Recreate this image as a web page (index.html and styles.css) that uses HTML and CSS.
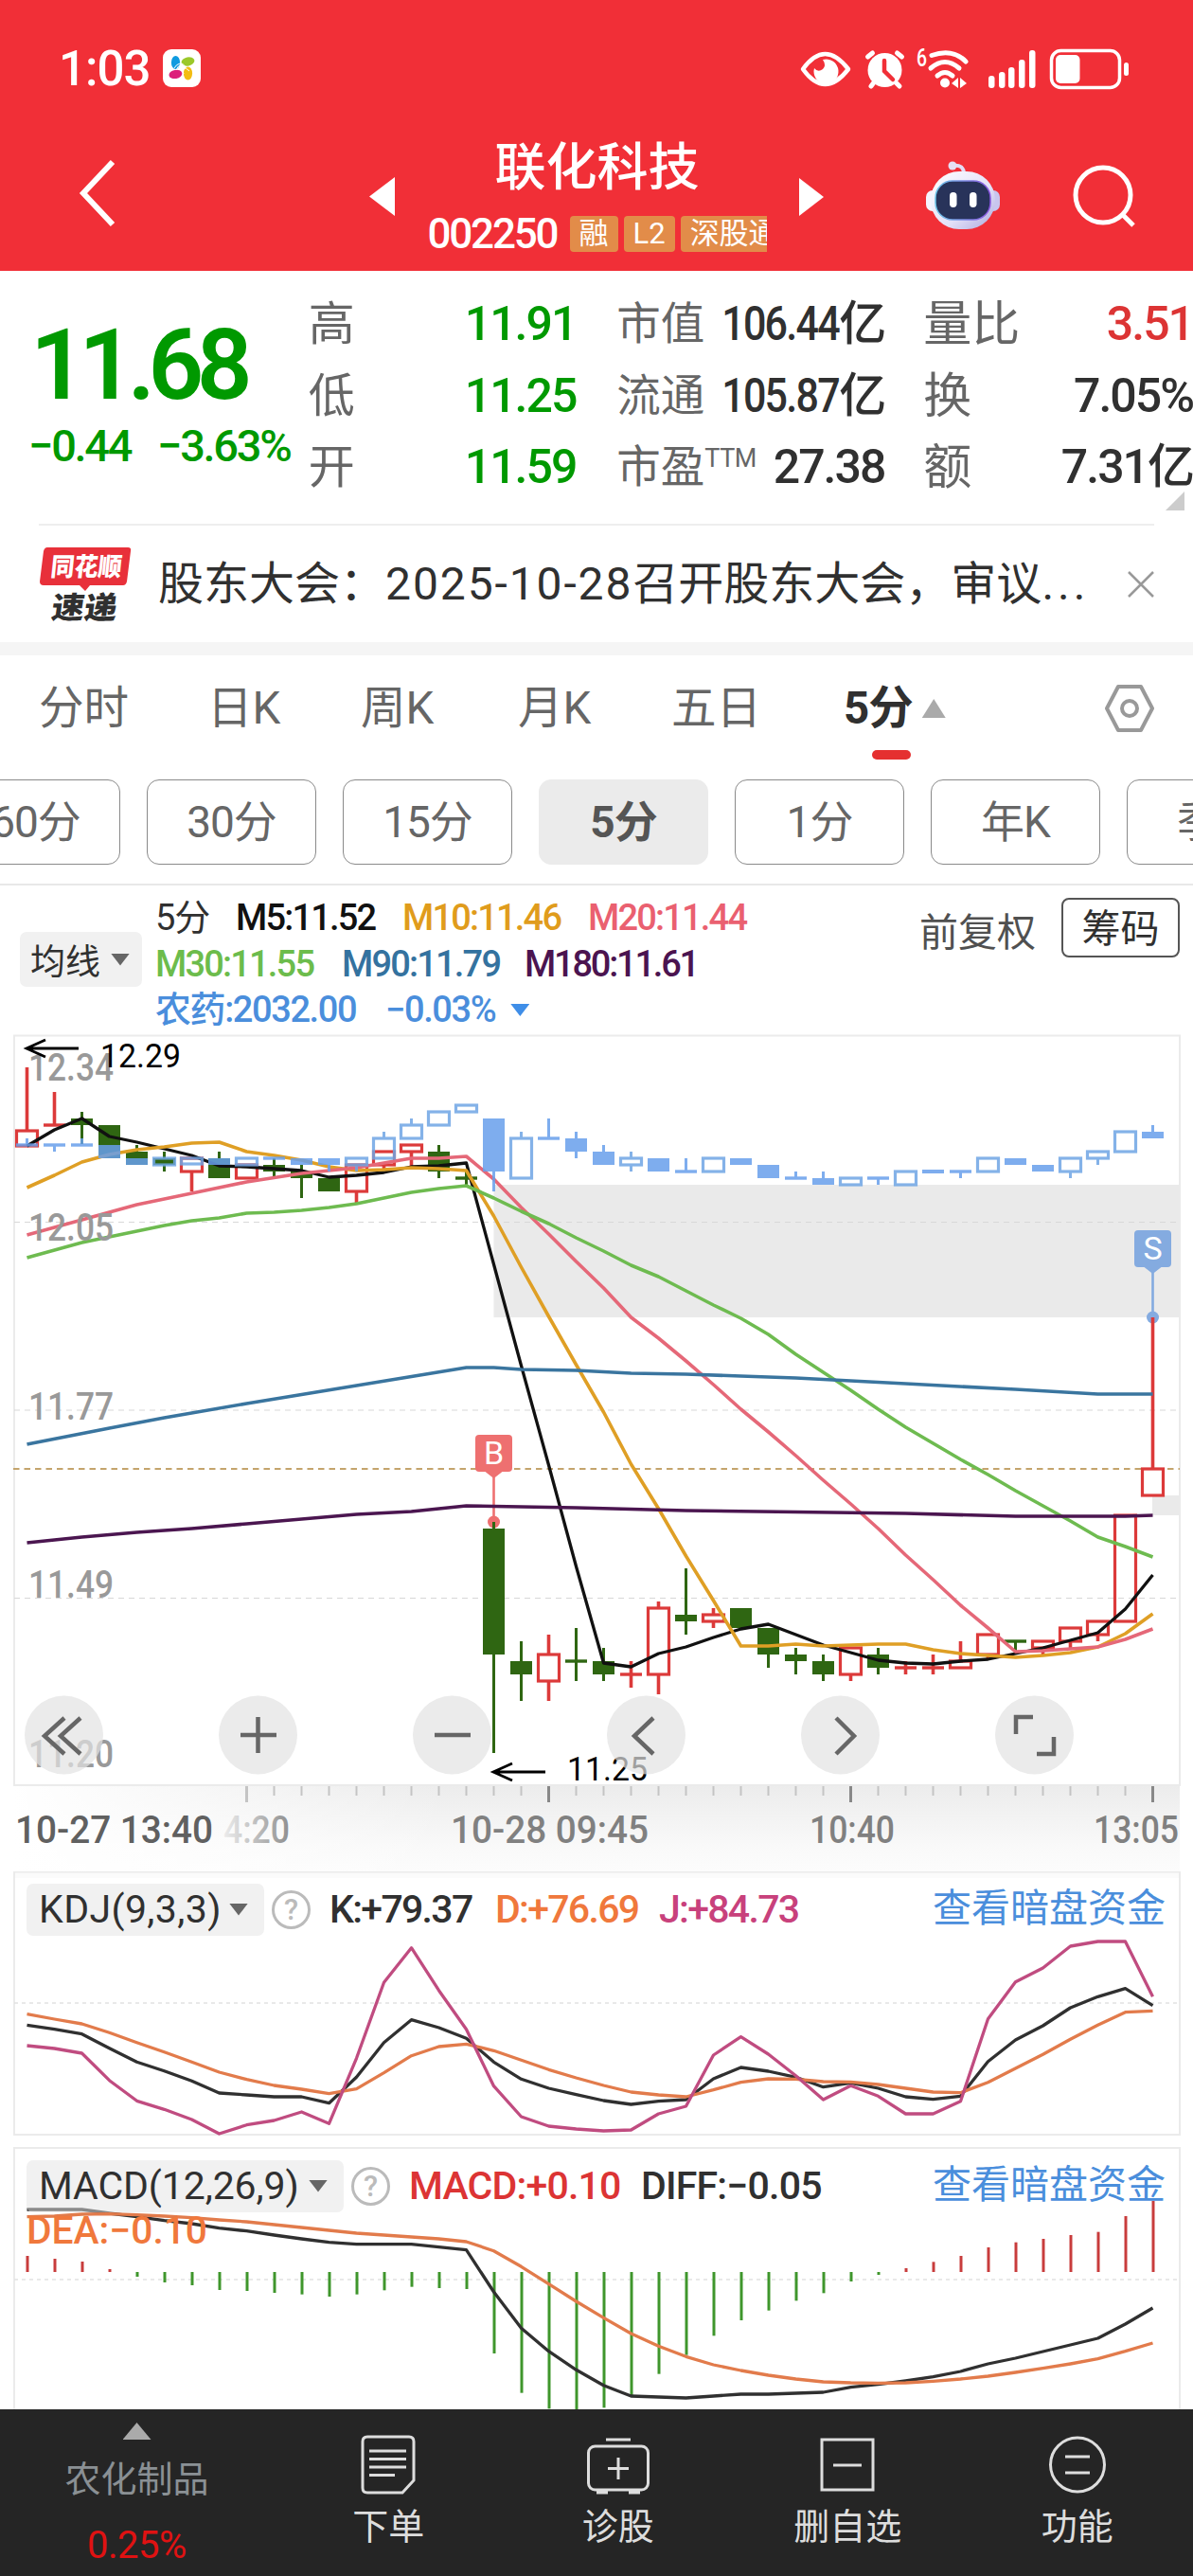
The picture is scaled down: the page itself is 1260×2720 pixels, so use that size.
FILE: index.html
```html
<!DOCTYPE html>
<html lang="zh-CN">
<head>
<meta charset="utf-8">
<title>联化科技 002250</title>
<link rel="stylesheet" href="styles.css">
</head>
<body>
<header class="top">
  <div class="status">
    <span class="clock">1:03</span>
    <svg class="app-icon" width="40" height="40" viewBox="0 0 40 40"><rect width="40" height="40" rx="9" fill="#fff"/><ellipse cx="13.5" cy="14" rx="4.6" ry="7" fill="#0f9be0"/><ellipse cx="26.500" cy="13" rx="7" ry="4.600" fill="#9bc82a" transform="rotate(-12 26 13)"/><ellipse cx="13.500" cy="26.500" rx="7" ry="4.600" fill="#dc1f7a" transform="rotate(-10 13 27)"/><ellipse cx="26.500" cy="25.500" rx="4.600" ry="7" fill="#f3bd12"/><g stroke="#fff" fill="none"><path d="M12 20q2-4 6-5M14 22q2-5 6-6M20 15q3 1 4 5M17 21q4 0 5 5M20 20q5-1 8 3"/></g></svg>
    <svg class="status-icons" width="352" height="48" viewBox="844 48 352 48">
      <g fill="none" stroke="#fff" stroke-width="4.500"><path d="M848 72Q871 40 896 72Q871 104 848 72Z" stroke-linejoin="round"/></g>
      <path d="M869 62a13 13 0 1 1-9 9q4 5 9 1q4-4 0-10z" fill="#fff"/>
      <circle cx="934.500" cy="73" r="18" fill="#fff"/>
      <g stroke="#fff" stroke-width="5" stroke-linecap="round"><path d="M916.500 59l5-4M952.500 59l-5-4M923 86l-3 4M946 86l4 4"/></g>
      <path d="M934 63v11l9 9" fill="none" stroke="#f12f37" stroke-width="4.500" stroke-linecap="round"/>
      <text x="968" y="69" class="wifi-gen" textLength="11" lengthAdjust="spacingAndGlyphs">6</text>
      <g fill="none" stroke="#fff" stroke-width="5" stroke-linecap="round"><path d="M984 57.500q22-8 36 6.500"/><path d="M983 71q15-13 30 0"/><path d="M990 79q8-7 16 0"/></g>
      <circle cx="998" cy="86.500" r="5" fill="#fff"/><path d="M1012 81v11l-7-5zM1014 81l7 6-7 5z" fill="#fff"/>
      <g fill="#fff"><rect x="1044" y="79" width="6.500" height="13" rx="3"/><rect x="1055" y="75" width="6.500" height="17" rx="3"/><rect x="1065" y="70" width="6.500" height="22" rx="3"/><rect x="1076" y="62" width="6.500" height="30" rx="3"/><rect x="1087" y="52" width="6.500" height="40" rx="3"/></g>
      <rect x="1110.500" y="52.500" width="72" height="39" rx="10" fill="none" stroke="#fff" stroke-width="3.500"/><rect x="1115" y="57" width="25.500" height="30" rx="5" fill="#fff"/><rect x="1187" y="65" width="5" height="14" rx="2.500" fill="#fff"/>
    </svg>
  </div>
  <div class="titlebar">
    <svg class="back" width="40" height="72" viewBox="0 0 40 72"><path d="M36 3L5 36L36 69" fill="none" stroke="#fff" stroke-width="6"/></svg>
    <svg width="27" height="41" viewBox="0 0 27 41"><path d="M27 0v41L0 20.500z" fill="#fff"/></svg>
    <div class="stock">
      <h1>联化科技</h1>
      <div class="code-row"><span class="code">002250</span><span class="tag">融</span><span class="tag">L2</span><span class="tag">深股通</span></div>
    </div>
    <svg width="26" height="40" viewBox="0 0 26 40"><path d="M0 0v40L26 20z" fill="#fff"/></svg>
    <svg class="robot" width="78" height="72" viewBox="0 0 78 72">
      <defs><linearGradient id="shell" x1="0" y1="0" x2="1" y2="1"><stop offset="0" stop-color="#fff"/><stop offset=".6" stop-color="#e3e0f8"/><stop offset="1" stop-color="#aaa9dc"/></linearGradient><linearGradient id="rim"><stop offset="0" stop-color="#6cc4e8"/><stop offset="1" stop-color="#8b55e0"/></linearGradient></defs>
      <path d="M28 5q12-2 12 9" fill="none" stroke="#e3dcf4" stroke-width="4"/><circle cx="28" cy="5" r="4.500" fill="#e6dff5"/>
      <rect x="0" y="31" width="14" height="22" rx="7" fill="#f5f3fd"/><rect x="64" y="31" width="14" height="22" rx="7" fill="#c8c5ee"/>
      <rect x="5" y="11" width="68" height="61" rx="30" fill="url(#shell)"/>
      <rect x="10" y="21" width="58" height="41" rx="18" fill="#28335a" stroke="url(#rim)" stroke-width="1.500"/>
      <rect x="25" y="33" width="7.500" height="16" rx="3.700" fill="#fff"/><rect x="46" y="33" width="7.500" height="16" rx="3.700" fill="#fff"/>
    </svg>
    <svg class="search" width="68" height="68" viewBox="0 0 68 68"><circle cx="32" cy="32" r="29" fill="none" stroke="#fff" stroke-width="5"/><path d="M53 53L64 64" stroke="#fff" stroke-width="5"/></svg>
  </div>
</header>

<section class="quote">
  <div class="price down">
    <div class="last">11.68</div>
    <div class="change"><span>−0.44</span><span>−3.63%</span></div>
  </div>
  <dl class="stats s1"><dt>高</dt><dd class="down">11.91</dd><dt>低</dt><dd class="down">11.25</dd><dt>开</dt><dd class="down">11.59</dd></dl>
  <dl class="stats s2"><dt>市值</dt><dd><span class="condensed">106.44</span>亿</dd><dt>流通</dt><dd><span class="condensed">105.87</span>亿</dd><dt>市盈<sup>TTM</sup></dt><dd>27.38</dd></dl>
  <dl class="stats s3"><dt>量比</dt><dd class="up">3.51</dd><dt>换</dt><dd>7.05%</dd><dt>额</dt><dd>7.31亿</dd></dl>
  <svg class="corner" width="20" height="20" viewBox="0 0 20 20"><path d="M20 0v20H0z" fill="#ccc"/></svg>
</section>

<section class="news">
  <svg class="brand" width="98" height="80" viewBox="0 0 98 80">
    <path d="M8 1H93Q97 1 96 5L92 37Q91 41 88 41H53L48 47L42 41H4Q0 41 0 37L4 5Q5 1 8 1Z" fill="#e8303a"/>
    <text x="11" y="31" class="brand-top" textLength="75" lengthAdjust="spacingAndGlyphs" transform="skewX(-6) translate(3 0)">同花顺</text>
    <text x="17" y="76" class="brand-bottom" textLength="69" lengthAdjust="spacingAndGlyphs" transform="skewX(-8) translate(5 0)">速递</text>
  </svg>
  <p class="headline">股东大会：<span class="date">2025-10-28</span>召开股东大会，审议<span class="dots">...</span></p>
  <svg width="30" height="30" viewBox="0 0 30 30"><path d="M2 2L28 28M28 2L2 28" stroke="#999" stroke-width="2.500"/></svg>
</section>

<nav class="tabs">
  <span>分时</span><span>日K</span><span>周K</span><span>月K</span><span>五日</span><span class="active">5分<i class="tri-up"></i></span>
  <svg width="54" height="52" viewBox="0 0 54 52"><path d="M15 3H39L51 26L39 49H15L3 26Z" fill="none" stroke="#999" stroke-width="4" stroke-linejoin="round"/><circle cx="27" cy="26" r="8" fill="none" stroke="#999" stroke-width="4"/></svg>
</nav>
<nav class="chips"><span>60分</span><span>30分</span><span>15分</span><span class="on">5分</span><span>1分</span><span>年K</span><span>季K</span></nav>

<section class="legend">
  <div class="ma-select">均线<i class="tri-down"></i></div>
  <div class="ma-values">
    <div class="r1"><span>5分</span><span class="m5">M5:11.52</span><span class="m10">M10:11.46</span><span class="m20">M20:11.44</span></div>
    <div class="r2"><span class="m30">M30:11.55</span><span class="m90">M90:11.79</span><span class="m180">M180:11.61</span></div>
    <div class="r3 ind"><span>农药:2032.00</span><span>−0.03%<i class="tri-down blue"></i></span></div>
  </div>
  <span class="adjust">前复权</span>
  <span class="chipbox">筹码</span>
</section>

<svg id="kline" class="chart" width="1260" height="884" viewBox="0 1092 1260 884"></svg>

<section class="panel kdj">
  <svg id="kdj" class="chart" width="1260" height="291" viewBox="0 1976 1260 291"></svg>
  <div class="panel-head">
    <span class="pill">KDJ(9,3,3)<i class="tri-down"></i></span><span class="help">?</span>
    <span class="k">K:+79.37</span><span class="d">D:+76.69</span><span class="j">J:+84.73</span><a>查看暗盘资金</a>
  </div>
</section>
<section class="panel macd">
  <svg id="macd" class="chart" width="1260" height="277" viewBox="0 2267 1260 277"></svg>
  <div class="panel-head">
    <span class="pill">MACD(12,26,9)<i class="tri-down"></i></span><span class="help">?</span>
    <span class="up">MACD:+0.10</span><span class="k">DIFF:−0.05</span><a>查看暗盘资金</a>
  </div>
</section>

<footer class="bottom">
  <div class="sector"><i class="tri-up"></i><span>农化制品</span><b>0.25%</b></div>
  <div class="act"><svg width="70" height="64" viewBox="0 0 70 64"><g fill="none" stroke="#ddd" stroke-width="3"><path d="M13 2H57Q62 2 62 7V48L50 61H13Q8 61 8 56V7Q8 2 13 2Z"/><path d="M15 17H54M15 25.500H54M15 34H54M15 42.500H42"/></g></svg><span>下单</span></div>
  <div class="act"><svg width="70" height="64" viewBox="0 0 70 64"><g fill="none" stroke="#ddd" stroke-width="3"><rect x="3.500" y="12" width="63" height="46" rx="7"/><path d="M22 5H48M35 24V47M24 35.500H46"/><path d="M12 60.500H24M46 60.500H58" stroke-width="4"/></g></svg><span>诊股</span></div>
  <div class="act"><svg width="70" height="64" viewBox="0 0 70 64"><g fill="none" stroke="#ddd" stroke-width="3"><rect x="8" y="5" width="54" height="53"/><path d="M20 32H50"/></g></svg><span>删自选</span></div>
  <div class="act"><svg width="70" height="64" viewBox="0 0 70 64"><g fill="none" stroke="#ddd" stroke-width="3"><circle cx="35" cy="31.500" r="28.500"/><path d="M22 23H48M22 40H48"/></g></svg><span>功能</span></div>
</footer>
<script src="charts.js"></script>
</body>
</html>
```
FILE: styles.css
```css
* { box-sizing: border-box; margin: 0; padding: 0; }
html { overflow: hidden; }
body { width: 1260px; height: 2720px; overflow: hidden; background: #fff; color: #303030; font-family: Roboto, "Noto Sans CJK SC", sans-serif; display: flex; flex-direction: column; }
svg { display: block; flex: none; }
i { font-style: normal; display: inline-block; flex: none; }
.up { color: #dc3434; }
.down { color: #090; }
.tri-down { width: 20px; height: 13px; background: #666; clip-path: polygon(0 0, 100% 0, 50% 100%); }
.tri-down.blue { background: #3f8ee8; }
.tri-up { width: 25px; height: 20px; background: #aaa; clip-path: polygon(0 100%, 100% 100%, 50% 0); }

.top { height: 286px; background: #f12f37; color: #fff; flex: none; }
.status { height: 126px; padding: 20px 64px 0 62px; display: flex; align-items: center; }
.clock { width: 110px; font-size: 51px; line-height: 60px; letter-spacing: -1px; font-weight: 500; }
.status-icons { margin-left: auto; }
.wifi-gen { font: 500 25px Roboto, sans-serif; fill: #fff; }
.app-icon { margin-top: -2px; }
.titlebar { height: 160px; display: grid; grid-template-columns: 390px 27px 427px 26px 108px 78px 77px 68px; align-items: center; }
.back { margin-left: 83px; margin-top: -4px; }
.titlebar > :nth-child(2), .titlebar > :nth-child(4) { margin-top: 3px; }
.robot { grid-column: 6; }
.search { grid-column: 8; margin-top: 3px; }
.stock { display: flex; flex-direction: column; align-items: center; gap: 19px; padding-top: 3px; }
h1 { font-size: 54px; line-height: 60px; font-weight: 500; }
.code-row { width: 358px; height: 40px; overflow: hidden; display: flex; align-items: center; gap: 6px; white-space: nowrap; }
.code { width: 144px; flex: none; font-size: 44px; font-weight: 500; line-height: 40px; letter-spacing: -2.200px; }
.tag { flex: none; height: 38px; padding: 0 10px; border-radius: 4px; background: #e28c49; font-size: 31px; line-height: 38px; }

.quote { position: relative; height: 268px; display: flex; flex: none; }
.quote::after { content: ""; position: absolute; left: 41px; right: 41px; bottom: -1px; height: 2px; background: #eee; }
.price { width: 328px; padding: 45px 0 0 32px; font-weight: 500; }
.last { font-size: 103px; line-height: 110px; letter-spacing: -7.500px; font-weight: 600; }
.change { margin: 5px 0 0 -2px; display: grid; grid-template-columns: 136px auto; font-size: 47px; line-height: 50px; letter-spacing: -2.300px; }
.stats { padding-top: 19px; display: grid; grid-auto-rows: 75.500px; grid-template-columns: auto auto; align-items: center; line-height: 75px; white-space: nowrap; }
.stats dt { color: #666; font-size: 49px; }
.stats dd { text-align: right; font-size: 50px; font-weight: 500; letter-spacing: -2px; }
.s1 { width: 283px; margin-left: -2px; }
.s2 { width: 283px; margin-left: 43px; grid-template-columns: 90px 193px; }
.s2 dt { font-size: 46.500px; }
.s2 dd { display: flex; justify-content: flex-end; }
.s3 { width: 285px; margin-left: 41px; }
.s3 dt { font-size: 51px; }
.condensed { display: inline-block; transform: scaleX(.86); transform-origin: right; }
sup { font-size: 27px; line-height: 1; vertical-align: 16px; letter-spacing: -.500px; }
.corner { position: absolute; right: 9px; bottom: 15px; }

.news { height: 124px; padding: 2px 40px 0 42px; display: flex; align-items: center; flex: none; }
.brand-top { font: 900 27px "Noto Sans CJK SC", sans-serif; fill: #fff; }
.brand-bottom { font: 900 32px "Noto Sans CJK SC", sans-serif; fill: #303030; }
.headline { flex: 1; margin-left: 27px; font-size: 48px; line-height: 60px; white-space: nowrap; }
.date { letter-spacing: 1.900px; }
.dots { letter-spacing: 4px; }

.tabs { position: relative; height: 124px; border-top: 14px solid #f5f5f5; display: grid; grid-template-columns: 178px 162px 166px 162px 182px 275px 60px; padding: 2px 0 0 41px; align-items: center; font-size: 47.500px; line-height: 108px; color: #666; flex: none; }
.tabs .active { color: #303030; font-weight: 700; letter-spacing: -1px; position: relative; display: flex; align-items: center; gap: 10px; }
.tabs .active::after { content: ""; position: absolute; left: 30px; bottom: 0; width: 41px; height: 10px; border-radius: 5px; background: #e53030; }
.chips { height: 133px; padding-top: 21px; margin-left: -52px; border-bottom: 2px solid #e8e8e8; width: 1312px; overflow: hidden; display: flex; gap: 28px; flex: none; }
.chips span { width: 179px; height: 90px; border: 1.500px solid #8a8a8a; border-radius: 13px; font-size: 46px; line-height: 89px; text-align: center; color: #666; flex: none; letter-spacing: -1px; }
.chips .on { background: #ebebeb; border-color: #ebebeb; font-weight: 700; color: #555; }

.legend { height: 157px; padding: 10px 14px 0 21px; display: flex; align-items: flex-start; flex: none; }
.ma-select { width: 129px; height: 58px; margin-top: 39px; padding: 0 13px 0 11px; border-radius: 7px; background: #f1f1f1; display: flex; align-items: center; justify-content: space-between; font-size: 37px; }
.ma-values { width: 809px; margin-left: 14px; font-size: 38px; line-height: 48.500px; font-weight: 500; letter-spacing: -1.800px; }
.ma-values > div { display: grid; white-space: nowrap; }
.r1 { grid-template-columns: 85px 176px 196px auto; }
.r1 span:first-child { font-weight: 400; letter-spacing: -1px; }
.r2 { grid-template-columns: 197px 193px auto; }
.r2 .m180 { letter-spacing: -2.200px; }
.r3 { grid-template-columns: 243px auto; letter-spacing: -1.400px; }
.r3 i { margin: 0 0 6px 16px; }
.m5 { color: #111; } .m10 { color: #e09c1c; } .m20 { color: #ea6070; } .m30 { color: #6cbc4c; } .m90 { color: #34729f; } .m180 { color: #4b1450; } .ind { color: #4a8edc; }
.adjust { font-size: 41px; line-height: 60px; color: #505050; margin-top: 10px; width: 149px; margin-left: -2px; }
.chipbox { width: 125px; height: 63px; margin: 3px 0 0 1px; border: 2px solid #555; border-radius: 8px; text-align: center; font-size: 41px; line-height: 62px; }

.chart { flex: none; font-family: Roboto, "Noto Sans CJK SC", sans-serif; }
.panel { position: relative; flex: none; }
.kdj { height: 291px; }
.macd { height: 277px; }
.panel-head { position: absolute; left: 28px; right: 29px; top: 12px; height: 56px; display: grid; align-items: center; font-size: 41px; font-weight: 500; letter-spacing: -1.700px; white-space: nowrap; }
.kdj .panel-head { grid-template-columns: 259px 61px 175px 173px 1fr auto; }
.macd .panel-head { top: 13px; grid-template-columns: 343px 61px 245px 1fr auto; }
.macd .up { letter-spacing: -.800px; }
.macd .k { letter-spacing: -.800px; }
.pill { justify-self: start; height: 55px; padding: 0 17px 0 13px; border-radius: 7px; background: rgba(227,227,227,.5); display: flex; align-items: center; font-weight: 400; justify-content: space-between; }
.kdj .pill { width: 251px; letter-spacing: .400px; }
.macd .pill { width: 335px; letter-spacing: -.100px; }
.help { width: 41px; height: 41px; border: 3px solid #bbb; border-radius: 50%; color: #bbb; font-size: 31px; line-height: 35px; text-align: center; letter-spacing: 0; }
.k { color: #303030; } .d { color: #f0783c; } .j { color: #c8417c; }
.panel-head a { color: #4a8edc; font-size: 41px; line-height: 50px; padding-bottom: 3px; font-weight: 400; letter-spacing: 0; }

.bottom { height: 176px; background: #252525; color: #ddd; display: grid; grid-template-columns: 289px repeat(4, 242.500px); font-size: 38px; flex: none; }
.sector { padding-top: 14px; display: flex; flex-direction: column; align-items: center; }
.sector .tri-up { width: 30px; height: 18px; }
.sector span { line-height: 50px; margin-top: 17px; color: #8a9094; }
.sector b { font-size: 40px; line-height: 50px; margin-top: 20px; font-weight: 400; color: #e01212; letter-spacing: -.500px; }
.act { padding-top: 27px; display: flex; flex-direction: column; align-items: center; }
.act span { line-height: 50px; margin-top: 8px; }
```
FILE: charts.js
```js
const STEP = 29, X0 = 28.5, N = 42;
const x = i => X0 + STEP * i;
const line = (pts, color, w = 3.6) =>
  `<polyline fill="none" stroke="${color}" stroke-width="${w}" stroke-linejoin="round" points="${pts.map(p => x(p[0]).toFixed(1) + ',' + p[1]).join(' ')}"/>`;
const seg = (x1, y1, x2, y2, c, w, extra = '') => `<path d="M${x1} ${y1}L${x2} ${y2}" stroke="${c}" stroke-width="${w}" ${extra}/>`;
const text = (s, tx, ty, size, len, fill, extra = '') =>
  `<text x="${tx}" y="${ty}" font-size="${size}" textLength="${len}" lengthAdjust="spacingAndGlyphs" fill="${fill}" ${extra}>${s}</text>`;

// [kind, high, bodyTop, bodyBottom, low]; r = hollow rise, g = filled fall
const candles = [
  ['r',1127,1194,1210,1210],['r',1153,1188,1188,1188],['g',1174,1181,1188,1208],['g',1188,1188,1223,1223],['g',1209,1216,1230,1230],['g',1216,1223,1230,1237],
  ['r',1223,1223,1237,1258],['g',1216,1223,1244,1244],['r',1230,1230,1244,1244],['g',1223,1230,1237,1242],['g',1230,1237,1244,1265],['g',1244,1244,1258,1258],
  ['r',1230,1230,1258,1270],['r',1216,1216,1230,1234],['r',1209,1209,1216,1231],['g',1209,1216,1237,1244],['g',1237,1244,1244,1251],['g',1607,1614,1747,1851],
  ['g',1733,1754,1768,1796],['r',1726,1747,1775,1796],['g',1719,1754,1754,1775],['g',1740,1754,1768,1775],['r',1754,1768,1768,1782],['r',1691,1698,1768,1789],
  ['g',1656,1705,1712,1726],['r',1698,1705,1712,1719],['g',1698,1698,1719,1719],['g',1719,1719,1747,1761],['g',1740,1747,1754,1768],['g',1747,1754,1768,1775],
  ['r',1740,1740,1768,1775],['g',1740,1747,1761,1768],['r',1754,1761,1761,1768],['r',1747,1761,1761,1768],['r',1733,1754,1761,1761],['r',1726,1726,1747,1751],
  ['g',1733,1733,1733,1743],['r',1733,1733,1740,1747],['r',1719,1719,1733,1740],['r',1712,1712,1726,1733],['r',1600,1600,1712,1712],['r',1391,1551,1579,1579]
];
// sector index overlay, h = hollow, s = solid
const sector = [
  ['s',1202,1209,1209,1209],['s',1209,1209,1209,1216],['s',1202,1209,1209,1209],['s',1209,1209,1223,1223],['s',1223,1223,1230,1230],['h',1223,1223,1230,1230],
  ['h',1223,1223,1229,1229],['s',1223,1223,1230,1230],['h',1223,1223,1230,1230],['s',1223,1223,1224,1224],['s',1223,1223,1230,1230],['s',1223,1223,1230,1237],
  ['h',1223,1223,1230,1237],['h',1195,1202,1223,1223],['h',1181,1188,1202,1202],['h',1174,1174,1188,1188],['h',1167,1167,1174,1174],['s',1181,1181,1237,1258],
  ['h',1195,1202,1244,1244],['s',1181,1202,1202,1202],['s',1195,1202,1216,1223],['s',1209,1216,1230,1230],['h',1216,1223,1230,1237],['s',1223,1223,1237,1237],
  ['s',1223,1237,1237,1237],['h',1223,1223,1237,1237],['s',1223,1223,1230,1230],['s',1230,1230,1244,1244],['s',1237,1244,1244,1244],['s',1237,1244,1251,1251],
  ['h',1244,1244,1251,1251],['s',1244,1244,1244,1251],['h',1237,1237,1251,1251],['s',1236,1235,1239,1239],['s',1237,1237,1237,1244],['h',1223,1223,1237,1237],
  ['s',1223,1223,1230,1230],['s',1230,1230,1237,1237],['h',1223,1223,1237,1244],['h',1216,1216,1223,1230],['h',1195,1195,1216,1216],['s',1188,1195,1202,1202]
];
function candle(c, i, color) {
  const [k, hi, top, bot, lo] = c, cx = x(i), hollow = k === 'r' || k === 'h', w = k === 'r' ? 3.6 : 3;
  let s = '';
  if (hi < top) s += seg(cx, hi, cx, top, color, w);
  if (lo > bot) s += seg(cx, bot, cx, lo, color, w);
  if (bot - top < 2) s += seg(cx - 11.5, top, cx + 11.5, top, color, 3.4);
  else if (hollow) s += `<rect x="${cx - 11}" y="${top}" width="22" height="${bot - top}" fill="none" stroke="${color}" stroke-width="3.200"/>`;
  else s += `<rect x="${cx - 11.5}" y="${top}" width="23" height="${bot - top}" fill="${color}"/>`;
  return s;
}
const index = a => a.map((v, i) => [i, v]);
const ma5 = index([1210,1193,1181,1200,1206,1213,1220,1231,1232,1234,1236,1243,1241,1238,1232,1231,1228,1335,1442,1547,1654,1756,1760,1746,1739,1729,1720,1715,1726,1737,1745,1753,1756,1757,1754,1752,1746,1740,1732,1724,1699,1663]);
const ma10 = index([1254,1241,1227,1219,1214,1211,1207,1206,1216,1220,1225,1232,1236,1235,1233,1234,1236,1284,1338,1390,1441,1491,1546,1593,1643,1690,1738,1738,1736,1738,1737,1736,1736,1742,1746,1748,1750,1748,1745,1739,1725,1704]);
const ma20 = [[0,1304],[2,1288],[4,1272],[6,1260],[8,1248],[10,1239],[12,1233],[14,1223],[15,1223],[16,1221],[17,1245],[18,1275],[19,1303],[20,1332],[21,1360],[22,1391],[23,1413],[24,1437],[25,1462],[26,1488],[27,1512],[28,1537],[29,1563],[30,1588],[31,1614],[32,1642],[33,1668],[34,1695],[35,1719],[36,1744],[37,1743],[38,1741],[39,1739],[40,1731],[41,1720]];
const ma30 = [[0,1328],[2,1312],[4,1300],[5,1294],[6,1289],[7,1286],[8,1281],[9,1280],[10,1278],[11,1275],[12,1271],[13,1265],[14,1259],[15,1255],[16,1252],[17,1265],[18,1279],[19,1292],[20,1307],[21,1321],[22,1336],[23,1348],[24,1363],[25,1378],[26,1392],[27,1409],[28,1430],[29,1449],[30,1468],[31,1488],[32,1507],[33,1524],[34,1541],[35,1557],[36,1574],[37,1590],[38,1606],[39,1623],[40,1633],[41,1644]];
const ma90 = [[0,1525],[3,1508],[5,1497],[8,1482],[12,1463],[16,1444],[17,1444],[18,1446],[20,1447],[22,1450],[24,1451],[26,1453],[28,1455],[32,1461],[36,1467],[39,1472],[41,1472]];
const ma180 = [[0,1629],[2,1623],[4,1618],[6,1614],[8,1609],[10,1604],[12,1599],[14,1596],[16,1590],[17,1590.5],[20,1592],[24,1595],[28,1596.500],[32,1598],[36,1601],[40,1601],[41,1600]];

let g = `<defs><linearGradient id="axis" x1="0" x2="0" y1="0" y2="1"><stop offset="0" stop-color="#ececec"/><stop offset=".7" stop-color="#f9f9f9"/><stop offset="1" stop-color="#fcfcfc"/></linearGradient>
<linearGradient id="fade"><stop offset="0" stop-color="#fff"/><stop offset="1" stop-color="#fff" stop-opacity="0"/></linearGradient>
<linearGradient id="tfade"><stop offset="0" stop-color="#ececec"/><stop offset="1" stop-color="#8f8f8f"/></linearGradient></defs>`;
g += '<rect x="14" y="1886" width="1232" height="90" fill="url(#axis)"/><rect x="14" y="1886" width="460" height="90" fill="url(#fade)"/>';
g += '<rect x="521.500" y="1251" width="725" height="140" fill="#eaeaea"/><rect x="1217" y="1579" width="29" height="21" fill="#eaeaea"/>';
g += '<rect x="15" y="1093.500" width="1231" height="791.500" fill="none" stroke="#ebebeb" stroke-width="2"/>';
[1290.5, 1489, 1687.5].forEach(y => g += seg(15, y, 1246, y, '#d8d8d8', 1.2, 'stroke-dasharray="6 5"'));
g += seg(14, 1551, 1246, 1551, '#c4a46c', 2, 'stroke-dasharray="6.500 5"');
// trade markers
const marker = (cx, top, end, c, ch) => `<rect x="${cx - 19.5}" y="${top}" width="39" height="39" rx="4" fill="${c}"/><path d="M${cx - 9} ${top + 39}h18l-9 7z" fill="${c}"/>${seg(cx, top + 45, cx, end, c, 2.6)}<circle cx="${cx}" cy="${end}" r="6.500" fill="${c}"/><text x="${cx}" y="${top + 31}" font-size="34" text-anchor="middle" fill="#fff">${ch}</text>`;
g += marker(521.5, 1515, 1607, '#ee7070', 'B') + marker(1217.5, 1299, 1391, '#84abe0', 'S');
candles.forEach((c, i) => g += candle(c, i, c[0] === 'r' ? '#dc3a3a' : '#2f6612'));
g += line(ma5, '#111', 3.3) + line(ma10, '#df9f25') + line(ma20, '#e56878');
g += '<g opacity=".85">' + sector.map((c, i) => candle(c, i, c[0] === 's' ? '#689fec' : '#6fa5e4')).join('') + '</g>';
g += line(ma30, '#6ebb50') + line(ma90, '#3a759f') + line(ma180, '#4b1650');
[['12.34',1141],['12.05',1310],['11.77',1499],['11.49',1687],['11.20',1866]].forEach(([s, y]) => g += text(s, 30, y, 40, 90, '#999', 'font-weight="500"'));
const arrow = (ax, ay) => `<path d="M${ax + 55} ${ay}H${ax}M${ax + 20} ${ay - 9}L${ax} ${ay}L${ax + 20} ${ay + 9}" fill="none" stroke="#000" stroke-width="2.800"/>`;
g += arrow(28, 1107) + text('12.29', 106, 1127, 35, 85, '#000') + arrow(521, 1871) + text('11.25', 599, 1880, 35, 85, '#000');
// floating controls
const icons = ['M68 1814L47 1833L68 1852M85 1814L64 1833L85 1852', 'M254 1832H292M272.500 1813V1851', 'M459 1832H497', 'M690 1814L670 1833L690 1852', 'M883 1814L902 1833L883 1852', 'M1073 1831V1813H1091M1113 1834V1852H1095'];
icons.forEach((d, i) => g += `<circle cx="${67.5 + 205 * i}" cy="1832" r="41.500" fill="#e3e3e3" fill-opacity=".7"/><path d="${d}" fill="none" stroke="#666" stroke-width="4.500"/>`);
// time axis
for (let i = 8; i < N; i++) {
  const major = (i - 8) % 11 === 0;
  g += seg(x(i), 1886, x(i), major ? 1903 : 1896, major && i > 8 ? '#888' : '#c4c4c4', major ? 3 : 2);
}
g += text('10-27 13:40', 16, 1946, 40, 209, '#606060', 'font-weight="500"') + text('4:20', 236, 1946, 40, 70, 'url(#tfade)', 'font-weight="500"');
g += text('10-28 09:45', 476, 1946, 40, 209, '#808080', 'font-weight="500"') + text('10:40', 855, 1946, 40, 90, '#808080', 'font-weight="500"') + text('13:05', 1155, 1946, 40, 90, '#808080', 'font-weight="500"');
document.getElementById('kline').innerHTML = g;

// oscillators: values are in thirds of a pixel below the panel origin
const osc = (a, base) => a.map((v, i) => [i, +(base + v / 3).toFixed(1)]);
const K = [535,548,563,608,652,680,712,750,756,762,762,782,700,590,518,543,577,652,706,735,755,774,786,776,771,705,669,681,700,731,718,735,762,770,760,650,582,537,480,445,419,473];
const D = [500,516,531,559,590,620,652,684,707,726,738,752,737,686,632,603,595,616,646,676,702,726,747,756,762,740,716,705,706,714,715,723,735,747,749,716,672,628,580,535,494,490];
const J = [600,609,624,710,775,802,834,879,851,837,810,847,640,400,290,425,548,728,825,855,864,870,867,816,792,630,572,627,695,771,727,760,816,816,776,515,398,354,285,270,270,445];
document.getElementById('kdj').innerHTML =
  '<rect x="14" y="1976" width="1232" height="7" fill="#fbfbfb"/><rect x="15" y="1976.500" width="1231" height="277.500" fill="none" stroke="#ebebeb" stroke-width="2"/>' +
  seg(15, 2115, 1246, 2115, '#e2e2e2', 1.5, 'stroke-dasharray="4 4"') + line(osc(K, 1960), '#303030', 3.3) + line(osc(D, 1960), '#e27b4b', 3.3) + line(osc(J, 1960), '#c04c80', 3.3);

const bars = [366,375,384,408,432,450,459,474,477,483,488,495,488,475,464,468,471,675,800,850,860,847,810,740,680,619,570,539,508,484,447,426,405,385,366,339,323,312,300,290,240,192];
const diff = [219,219,219,231,242,254,264,278,287,300,312,323,329,329,329,338,347,480,595,668,727,776,810,813,816,810,804,804,801,798,782,773,762,749,732,708,690,669,648,627,582,531];
const dea = [242,240,234,233,236,240,245,252,258,267,276,285,294,300,306,312,321,350,400,455,510,562,612,652,685,711,729,744,756,765,768,769,768,763,756,747,735,722,708,692,668,642];
document.getElementById('macd').innerHTML =
  '<rect x="15" y="2268" width="1231" height="320" fill="none" stroke="#ebebeb" stroke-width="2"/>' + seg(15, 2407, 1246, 2407, '#e2e2e2', 1.5, 'stroke-dasharray="4 4"') +
  bars.map((v, i) => seg(x(i) + .5, 2399, x(i) + .5, 2260 + v / 3, v < 417 ? '#c83c3c' : '#3f962c', 3)).join('') +
  line(osc(diff, 2260), '#303030', 3.3) + line(osc(dea, 2260), '#e27b4b', 3.3) + text('DEA:−0.10', 28, 2369, 40, 191, '#f0783c', 'font-weight="500"');
```
